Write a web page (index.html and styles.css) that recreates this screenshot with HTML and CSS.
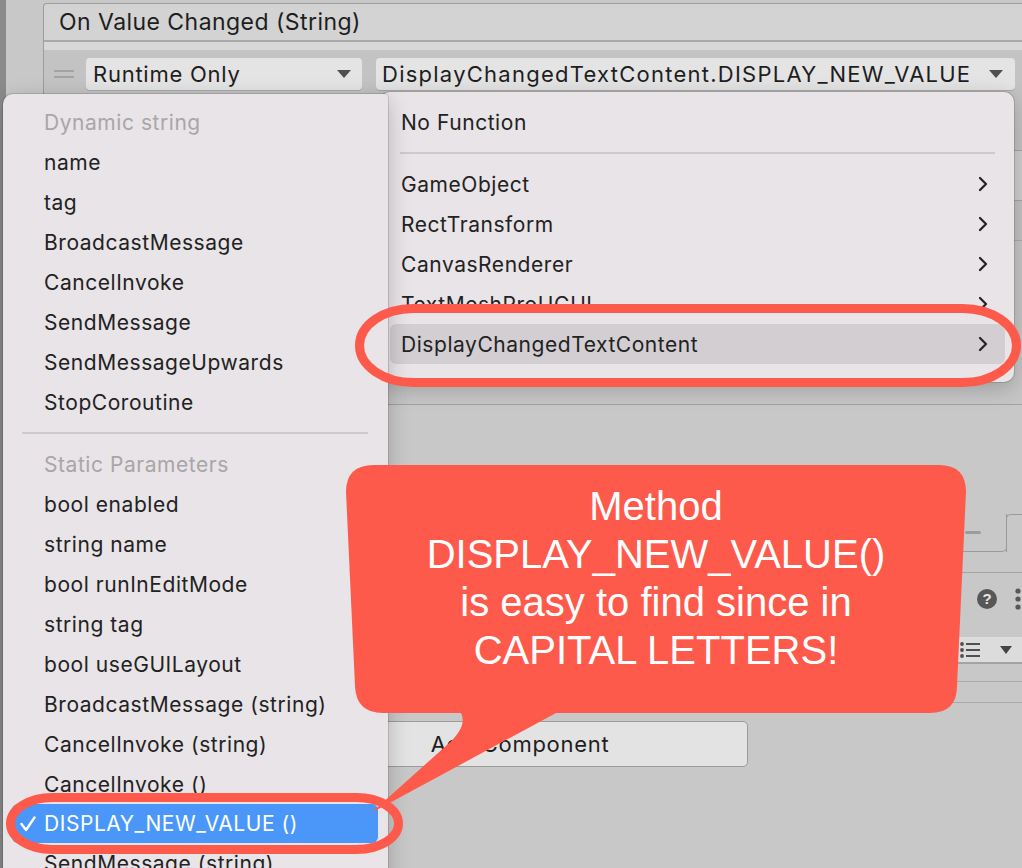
FILE: index.html
```html
<!DOCTYPE html>
<html lang="en">
<head>
<meta charset="utf-8">
<title>Unity Event Function Menu</title>
<link rel="stylesheet" href="styles.css">
</head>
<body>
<div class="inspector">
  <div class="edge"></div>
  <div class="main">
    <section class="event">
      <div class="event-head">On Value Changed (String)</div>
      <div class="event-band"></div>
      <div class="event-row">
        <span class="handle"></span>
        <div class="dd dd-mode"><span>Runtime Only</span><i class="tri"></i></div>
        <div class="dd dd-func"><span>DisplayChangedTextContent.DISPLAY_NEW_VALUE</span><i class="tri"></i></div>
      </div>
      <div class="event-rows">
        <div class="er er1"></div>
        <div class="er er2"></div>
        <div class="er er3"></div>
        <div class="er er4"></div>
      </div>
    </section>
    <div class="list-footer">
      <div class="minus-box"><span class="dash"></span></div>
      <div class="next-box"></div>
    </div>
    <div class="comp-head">
      <span class="help">?</span>
      <svg class="dots" width="6" height="22" viewBox="0 0 6 22"><circle cx="3" cy="3" r="2.6"/><circle cx="3" cy="11" r="2.6"/><circle cx="3" cy="19" r="2.6"/></svg>
    </div>
    <div class="comp-band">
      <svg class="list-ico" width="20" height="16" viewBox="0 0 20 16"><circle cx="2" cy="2" r="1.9"/><circle cx="2" cy="8" r="1.9"/><circle cx="2" cy="14" r="1.9"/><rect x="6" y="1" width="14" height="2"/><rect x="6" y="7" width="14" height="2"/><rect x="6" y="13" width="14" height="2"/></svg>
      <i class="tri tri-band"></i>
    </div>
    <div class="rule rule-a"></div>
    <div class="rule rule-b"></div>
    <div class="add-btn">Add Component</div>
  </div>
</div>

<div class="menu menu-func">
  <div class="mi">No Function</div>
  <div class="msep"></div>
  <div class="mi sub">GameObject<svg class="chev" width="10" height="16" viewBox="0 0 10 16"><polyline points="2,2 8,8 2,14"/></svg></div>
  <div class="mi sub">RectTransform<svg class="chev" width="10" height="16" viewBox="0 0 10 16"><polyline points="2,2 8,8 2,14"/></svg></div>
  <div class="mi sub">CanvasRenderer<svg class="chev" width="10" height="16" viewBox="0 0 10 16"><polyline points="2,2 8,8 2,14"/></svg></div>
  <div class="mi sub">TextMeshProUGUI<svg class="chev" width="10" height="16" viewBox="0 0 10 16"><polyline points="2,2 8,8 2,14"/></svg></div>
  <div class="mi sub hover">DisplayChangedTextContent<svg class="chev" width="10" height="16" viewBox="0 0 10 16"><polyline points="2,2 8,8 2,14"/></svg></div>
</div>

<div class="menu menu-methods">
  <div class="mi head">Dynamic string</div>
  <div class="mi">name</div>
  <div class="mi">tag</div>
  <div class="mi">BroadcastMessage</div>
  <div class="mi">CancelInvoke</div>
  <div class="mi">SendMessage</div>
  <div class="mi">SendMessageUpwards</div>
  <div class="mi">StopCoroutine</div>
  <div class="msep"></div>
  <div class="mi head">Static Parameters</div>
  <div class="mi">bool enabled</div>
  <div class="mi">string name</div>
  <div class="mi">bool runInEditMode</div>
  <div class="mi">string tag</div>
  <div class="mi">bool useGUILayout</div>
  <div class="mi">BroadcastMessage (string)</div>
  <div class="mi">CancelInvoke (string)</div>
  <div class="mi">CancelInvoke ()</div>
  <div class="mi selected"><svg class="check" width="16" height="16" viewBox="0 0 16 16"><polyline points="1.5,8 6,14 14.5,1.5"/></svg>DISPLAY_NEW_VALUE ()</div>
  <div class="mi">SendMessage (string)</div>
</div>

<svg class="marks" width="1022" height="868" viewBox="0 0 1022 868">
  <rect class="ring" x="359.5" y="308.5" width="657" height="74" rx="54" ry="37"/>
  <rect class="ring" x="10.5" y="797.5" width="388" height="52" rx="42" ry="26"/>
  <path class="bubble" d="M374,465 L939,465 Q966,465 966,492 L957,686 Q957,713 930,713 L556,713 L371,813 L447,745 Q468,726 461,713 L383,713 Q356,713 355,686 L346,492 Q346,465 374,465 Z"/>
</svg>
<div class="callout-text">Method<br>DISPLAY_NEW_VALUE()<br>is easy to find since in<br>CAPITAL LETTERS!</div>
</body>
</html>
```

FILE: styles.css
```css
html, body {
  margin: 0;
  padding: 0;
}
body {
  width: 1022px;
  height: 868px;
  overflow: hidden;
  position: relative;
  background: #c8c8c8;
  font-family: Inter, "Liberation Sans", sans-serif;
  color: #1e1e1e;
}

/* ---------- underlying inspector ---------- */
.inspector {
  display: flex;
  height: 868px;
}
.edge {
  width: 6px;
  flex: none;
  background: #8b8b8b;
}
.main {
  margin-left: 37px;
  width: 990px;
  flex: none;
  display: flex;
  flex-direction: column;
}
.event {
  margin-top: 3px;
  border-top: 1px solid #9d9d9d;
  border-left: 1px solid #9d9d9d;
  border-bottom: 1px solid #a3a3a3;
  border-top-left-radius: 4px;
  background: #c3c3c3;
}
.event-head {
  height: 36px;
  line-height: 37px;
  padding-left: 15px;
  font-size: 23px;
  letter-spacing: 0.45px;
  background: #d3d3d3;
  border-bottom: 2px solid #a9a9a9;
  border-top-left-radius: 4px;
}
.event-band {
  height: 8px;
  background: #d8d8d8;
}
.event-row {
  display: flex;
  align-items: center;
  padding: 8px 0 2px 10px;
  background: #c3c3c3;
}
.handle {
  width: 20px;
  height: 8px;
  border-top: 2px solid #a3a3a3;
  border-bottom: 2px solid #a3a3a3;
  box-sizing: border-box;
  flex: none;
}
.dd {
  height: 32px;
  box-sizing: border-box;
  background: #e4e4e4;
  border-radius: 4px;
  box-shadow: 0 1px 0 #a9a9a9;
  display: flex;
  align-items: center;
  justify-content: space-between;
  padding: 0 11px 0 7px;
  font-size: 22px;
  letter-spacing: 0.75px;
  flex: none;
}
.dd-mode {
  margin-left: 12px;
  width: 276px;
}
.dd-func {
  margin-left: 14px;
  width: 639px;
  padding-left: 6px;
  padding-right: 12px;
  letter-spacing: 1.25px;
}
.tri {
  display: block;
  width: 0;
  height: 0;
  border-left: 7px solid transparent;
  border-right: 7px solid transparent;
  border-top: 8px solid #4f4f4f;
}
.event-rows {
  display: flex;
  flex-direction: column;
}
.er1 { height: 58px; background: #c3c3c3; }
.er2 { height: 49px; background: #cfcfcf; border-top: 1px solid #a6a6a6; }
.er3 { height: 39px; background: #c3c3c3; border-top: 1px solid #a6a6a6; }
.er4 { height: 163px; background: #c6c6c6; border-top: 1px solid #acacac; }

.list-footer {
  margin-top: 109px;
  height: 38px;
  display: flex;
  justify-content: flex-end;
}
.minus-box {
  width: 68px;
  box-sizing: border-box;
  border-right: 1px solid #9a9a9a;
  border-bottom: 1px solid #9a9a9a;
  border-bottom-right-radius: 5px;
  display: flex;
  align-items: center;
  justify-content: center;
}
.dash {
  width: 16px;
  height: 3px;
  border-radius: 2px;
  background: #9c9c9c;
}
.next-box {
  width: 26px;
  margin-left: -1px;
  border-top: 1px solid #9a9a9a;
  border-left: 1px solid #9a9a9a;
  border-top-left-radius: 5px;
}
.comp-head {
  margin-top: 20px;
  height: 52px;
  border-top: 1px solid #a3a3a3;
  display: flex;
  align-items: center;
  justify-content: flex-end;
  gap: 18px;
  padding-right: 12px;
}
.help {
  width: 20px;
  height: 20px;
  border-radius: 50%;
  background: #575757;
  color: #e6e6e6;
  font: bold 15px/20px "Liberation Sans", sans-serif;
  text-align: center;
}
.dots { fill: #585858; }
.comp-band {
  margin-top: 12px;
  height: 25px;
  background: #dcdcdc;
  border-bottom: 2px solid #a3a3a3;
  display: flex;
  align-items: center;
  justify-content: flex-end;
  gap: 20px;
  padding-right: 21px;
}
.list-ico { fill: #505050; }
.tri-band {
  border-left-width: 6px;
  border-right-width: 6px;
  border-top: 8px solid #444;
}
.rule {
  border-top: 1px solid #a9a9a9;
}
.rule-a { margin-top: 17px; }
.rule-b { margin-top: 20px; }
.add-btn {
  margin-top: 18px;
  margin-left: 249px;
  width: 456px;
  height: 46px;
  box-sizing: border-box;
  border: 1px solid #9b9b9b;
  border-radius: 5px;
  background: #e3e3e3;
  font-size: 22px;
  letter-spacing: 0.7px;
  line-height: 44px;
  text-align: center;
}

/* ---------- popup menus ---------- */
.menu {
  position: absolute;
  box-sizing: border-box;
  background: #e8e4e7;
  border-radius: 10px;
  box-shadow: 0 0 0 1px rgba(0, 0, 0, 0.13), 0 6px 22px rgba(0, 0, 0, 0.22);
  font-size: 21px;
  letter-spacing: 0.55px;
  color: #222;
}
.menu-func {
  left: 380px;
  top: 92px;
  width: 634px;
  height: 290px;
  padding: 10px 9px 0 10px;
}
.menu-methods {
  left: 3px;
  top: 94px;
  width: 385px;
  height: 800px;
  padding: 8px 10px 0 9px;
  border-radius: 10px 4px 0 0;
}
.mi {
  height: 40px;
  display: flex;
  align-items: center;
  border-radius: 6px;
  white-space: nowrap;
}
.menu-func .mi {
  padding: 0 17px 0 11px;
}
.menu-methods .mi {
  padding-left: 32px;
  position: relative;
}
.mi.sub {
  justify-content: space-between;
}
.mi.hover {
  background: #d2ced2;
}
.mi.head {
  color: #a9a6a8;
}
.mi.selected {
  height: 39px;
  background: #4a97f9;
  color: #fff;
}
.check {
  position: absolute;
  left: 8px;
  top: 12px;
  fill: none;
  stroke: #fff;
  stroke-width: 2.4;
  stroke-linecap: round;
  stroke-linejoin: round;
}
.chev {
  fill: none;
  stroke: #262626;
  stroke-width: 2.3;
  stroke-linecap: round;
  stroke-linejoin: round;
}
.msep {
  height: 22px;
  display: flex;
  align-items: center;
  padding: 0 10px;
}
.msep::after {
  content: "";
  flex: 1;
  height: 2px;
  background: #cdc9cd;
}

/* ---------- annotations ---------- */
.marks {
  position: absolute;
  left: 0;
  top: 0;
  pointer-events: none;
}
.ring {
  fill: none;
  stroke: #fe5a4b;
  stroke-width: 9;
}
.bubble {
  fill: #fe5a4b;
}
.callout-text {
  position: absolute;
  left: 346px;
  top: 482px;
  width: 620px;
  text-align: center;
  color: #fff;
  font-family: "Liberation Sans", Arial, sans-serif;
  font-size: 40px;
  line-height: 48px;
}
```
